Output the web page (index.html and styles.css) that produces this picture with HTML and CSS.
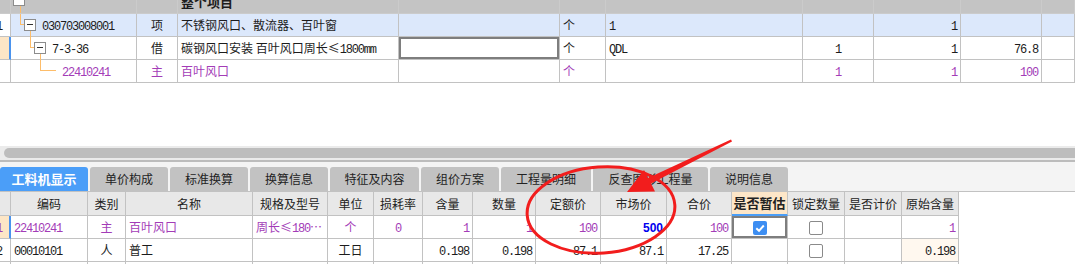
FILE: index.html
```html
<!DOCTYPE html>
<html>
<head>
<meta charset="utf-8">
<title>工料机显示</title>
<link rel="stylesheet" href="styles.css">
</head>
<body>
<div class="page">

  <div class="grid tree">
    <div class="row head">
      <div class="c rn"></div>
      <div class="c code l0"><i class="box"></i><i class="dn"></i></div>
      <div class="c"></div>
      <div class="c"><b class="cut">整个项目</b></div>
      <div class="c"></div>
      <div class="c"></div>
      <div class="c"></div>
      <div class="c"></div>
      <div class="c"></div>
      <div class="c"></div>
      <div class="c"></div>
    </div>
    <div class="row sel">
      <div class="c rn"><span class="n">1</span></div>
      <div class="c code l1"><i class="up"></i><i class="hz"></i><i class="box"></i><i class="dn"></i><span class="n">030703008001</span></div>
      <div class="c ct">项</div>
      <div class="c">不锈钢风口、散流器、百叶窗</div>
      <div class="c"></div>
      <div class="c">个</div>
      <div class="c"><span class="n">1</span></div>
      <div class="c"></div>
      <div class="c rt"><span class="n">1</span></div>
      <div class="c"></div>
      <div class="c"></div>
    </div>
    <div class="row">
      <div class="c rn cur"></div>
      <div class="c code l2"><i class="up"></i><i class="hz"></i><i class="box"></i><i class="dn"></i><span class="n">7-3-36</span></div>
      <div class="c ct">借</div>
      <div class="c">碳钢风口安装 百叶风口周长≤<span class="n">1800mm</span></div>
      <div class="c edit"></div>
      <div class="c">个</div>
      <div class="c"><span class="n">QDL</span></div>
      <div class="c ct"><span class="n">1</span></div>
      <div class="c rt"><span class="n">1</span></div>
      <div class="c rt"><span class="n">76.8</span></div>
      <div class="c"></div>
    </div>
    <div class="row main">
      <div class="c rn"></div>
      <div class="c code l3"><i class="up"></i><i class="hz"></i><span class="n">22410241</span></div>
      <div class="c ct">主</div>
      <div class="c">百叶风口</div>
      <div class="c"></div>
      <div class="c">个</div>
      <div class="c"></div>
      <div class="c ct"><span class="n">1</span></div>
      <div class="c rt"><span class="n">1</span></div>
      <div class="c rt"><span class="n">100</span></div>
      <div class="c"></div>
    </div>
  </div>

  <div class="blank"></div>

  <div class="hscroll"><div class="thumb"></div></div>
  <div class="split"></div>

  <div class="tabbar">
    <div class="tab on w88">工料机显示</div>
    <div class="tab">单价构成</div>
    <div class="tab">标准换算</div>
    <div class="tab">换算信息</div>
    <div class="tab w89">特征及内容</div>
    <div class="tab">组价方案</div>
    <div class="tab w90">工程量明细</div>
    <div class="tab w115">反查图形工程量</div>
    <div class="tab">说明信息</div>
  </div>

  <div class="grid parts">
    <div class="row head">
      <div class="c rn"></div>
      <div class="c">编码</div>
      <div class="c">类别</div>
      <div class="c">名称</div>
      <div class="c">规格及型号</div>
      <div class="c">单位</div>
      <div class="c">损耗率</div>
      <div class="c">含量</div>
      <div class="c">数量</div>
      <div class="c">定额价</div>
      <div class="c">市场价</div>
      <div class="c">合价</div>
      <div class="c mark">是否暂估</div>
      <div class="c">锁定数量</div>
      <div class="c">是否计价</div>
      <div class="c">原始含量</div>
    </div>
    <div class="row main">
      <div class="c rn cur"><span class="n">1</span></div>
      <div class="c"><span class="n">22410241</span></div>
      <div class="c ct">主</div>
      <div class="c">百叶风口</div>
      <div class="c">周长≤<span class="n">180</span>…</div>
      <div class="c ct">个</div>
      <div class="c ct"><span class="n">0</span></div>
      <div class="c rt"><span class="n">1</span></div>
      <div class="c rt"><span class="n">1</span></div>
      <div class="c rt"><span class="n">100</span></div>
      <div class="c rt"><b class="price">500</b></div>
      <div class="c rt"><span class="n">100</span></div>
      <div class="c ct focus">
        <svg class="chk" width="14" height="14" viewBox="0 0 14 14"><rect width="14" height="14" rx="2" fill="#3d8ef2"/><path d="M3.3 7.3 L6 9.8 L10.8 4.5" fill="none" stroke="#fff" stroke-width="2"/></svg>
      </div>
      <div class="c ct"><span class="cb"></span></div>
      <div class="c"></div>
      <div class="c rt"><span class="n">1</span></div>
    </div>
    <div class="row">
      <div class="c rn"><span class="n">2</span></div>
      <div class="c"><span class="n">00010101</span></div>
      <div class="c ct">人</div>
      <div class="c">普工</div>
      <div class="c"></div>
      <div class="c ct">工日</div>
      <div class="c"></div>
      <div class="c rt"><span class="n">0.198</span></div>
      <div class="c rt"><span class="n">0.198</span></div>
      <div class="c rt"><span class="n">87.1</span></div>
      <div class="c rt"><span class="n">87.1</span></div>
      <div class="c rt"><span class="n">17.25</span></div>
      <div class="c"></div>
      <div class="c ct"><span class="cb"></span></div>
      <div class="c"></div>
      <div class="c rt orig"><span class="n">0.198</span></div>
    </div>
    <div class="row">
      <div class="c rn"></div>
      <div class="c"></div>
      <div class="c"></div>
      <div class="c"></div>
      <div class="c"></div>
      <div class="c"></div>
      <div class="c"></div>
      <div class="c"></div>
      <div class="c"></div>
      <div class="c"></div>
      <div class="c"></div>
      <div class="c"></div>
      <div class="c"></div>
      <div class="c"></div>
      <div class="c"></div>
      <div class="c"></div>
    </div>
  </div>

  <!-- red hand annotation drawn over the grid -->
  <svg class="ink" width="1075" height="264" viewBox="0 0 1075 264">
    <ellipse cx="601" cy="210" rx="74" ry="43" transform="rotate(-4 601 210)" fill="none" stroke="#f21d1d" stroke-width="3"/>
    <polygon points="731,139.5 732,141.5 651,183.5 655,191.5 627,192 644,170 648,178" fill="#f21d1d"/>
  </svg>

</div>
</body>
</html>
```

FILE: styles.css
```css
body {
	margin: 0;
	background: white;
	font-family: "Noto Sans CJK SC", "Liberation Sans", sans-serif;
	font-size: 12px;
	color: #1c1c1c;
}
.page {
	position: relative;
	width: 1075px;
	height: 264px;
	overflow: hidden;
}
.grid {
	display: grid;
}
.row {
	display: contents;
}
.c {
	box-sizing: border-box;
	border-right: 1px solid #c2c2c2;
	border-bottom: 1px solid #c2c2c2;
	padding: 0 3px;
	line-height: 22px;
	white-space: nowrap;
	overflow: hidden;
}
.ct {
	text-align: center;
}
.rt {
	text-align: right;
}
.n {
	font-family: "Liberation Mono", monospace;
	letter-spacing: -1.2px;
}
.rn {
	padding: 0;
	text-indent: -4px;
}
.rn.cur {
	background: #fde6c6;
	border-right: 2px solid #4a93ee;
}

/* upper tree grid */
.tree {
	grid-template-columns: 11px 126px 41px 221px 161px 46px 197px 71px 87px 81px 33px;
	grid-template-rows: 14px 23px 23px 23px;
}
.tree .head .c {
	background: #c4c4c4;
	border-color: #cbcbcb;
	line-height: 14px;
	overflow: hidden;
}
.cut {
	display: block;
	margin-top: -8px;
	font-size: 13px;
	line-height: 20px;
}
.sel .c {
	background: #dce8fb;
}
.sel .rn {
	background: white;
}
.main .c {
	color: #a33cb7;
}
.edit {
	box-shadow: inset 0 0 0 2px #7e7e7e;
}
.code {
	position: relative;
	overflow: visible;
}
.code i {
	position: absolute;
	display: block;
}
.code .up, .code .dn {
	width: 1px;
	background: #fdbd6a;
}
.code .hz {
	height: 1px;
	top: 10px;
	background: #fdbd6a;
}
.code .box {
	box-sizing: border-box;
	width: 12px;
	height: 12px;
	top: 5px;
	border: 1px solid #8c8c8c;
	background: white;
}
.code .box:after {
	content: "";
	position: absolute;
	left: 2px;
	top: 4px;
	width: 6px;
	height: 1px;
	background: #333;
}
.code .up {
	top: 0;
	height: 10px;
}
.code .dn {
	top: 17px;
	bottom: -1px;
}
.l0 .box {
	left: 2px;
	top: -6px;
}
.l0 .dn {
	left: 9px;
	top: 6px;
}
.l1 {
	padding-left: 31px;
}
.l1 .up, .l1 .hz {
	left: 9px;
}
.l1 .hz {
	width: 4px;
}
.l1 .box {
	left: 13px;
}
.l1 .dn {
	left: 19px;
}
.l2 {
	padding-left: 41px;
}
.l2 .up, .l2 .hz {
	left: 19px;
}
.l2 .hz {
	width: 4px;
}
.l2 .box {
	left: 23px;
}
.l2 .dn {
	left: 29px;
}
.l3 {
	padding-left: 51px;
}
.l3 .up, .l3 .hz {
	left: 29px;
}
.l3 .hz {
	width: 16px;
}

.blank {
	height: 63px;
}
.hscroll {
	box-sizing: border-box;
	height: 14px;
	padding: 2px 0 2px 4px;
	background: #ebebeb;
}
.thumb {
	height: 10px;
	border-radius: 5px 0 0 5px;
	background: #bdbdbd;
}
.split {
	height: 2px;
	background: #bcbcbc;
}

/* tabs */
.tabbar {
	box-sizing: border-box;
	display: flex;
	align-items: flex-end;
	gap: 2px;
	height: 30px;
	padding-top: 5px;
	background: #f4f4f4;
	border-bottom: 1px solid #c2c2c2;
}
.tab {
	width: 78px;
	height: 24px;
	line-height: 24px;
	text-align: center;
	border-radius: 3px 3px 0 0;
	background: #c2c2c2;
	color: #222;
}
.tab.on {
	background: #4b9ef8;
	color: white;
	font-weight: bold;
	font-size: 13px;
}
.w88 { width: 88px; }
.w89 { width: 89px; }
.w90 { width: 90px; }
.w115 { width: 115px; }

/* lower resource grid */
.parts {
	width: 959px;
	grid-template-columns: 11px 77px 38px 127px 75px 46px 49px 50px 63px 65px 66px 65px 56px 57px 57px 57px;
	grid-template-rows: 24px 23px 23px 23px;
}
.parts .head .c {
	background: #e8e8e8;
	text-align: center;
	line-height: 23px;
	color: #222;
}
.parts .head .mark {
	background: #fde6c8;
	border-bottom: 2px solid #4a9ef8;
	font-weight: bold;
	font-size: 13px;
	line-height: 22px;
	padding: 0;
}
.parts .head .rn {
	background: #e8e8e8;
}
.price {
	font-family: "Liberation Sans", sans-serif;
	color: #0000ee;
}
.focus {
	box-shadow: inset 0 0 0 2px #7e7e7e;
}
.chk, .cb {
	display: inline-block;
	vertical-align: middle;
	margin-top: -2px;
}
.cb {
	box-sizing: border-box;
	width: 14px;
	height: 14px;
	border: 1px solid #8a8a8a;
	border-radius: 2px;
	background: white;
}
.orig {
	background: #fff8ef;
}
.ink {
	position: absolute;
	left: 0;
	top: 0;
	pointer-events: none;
}
```
